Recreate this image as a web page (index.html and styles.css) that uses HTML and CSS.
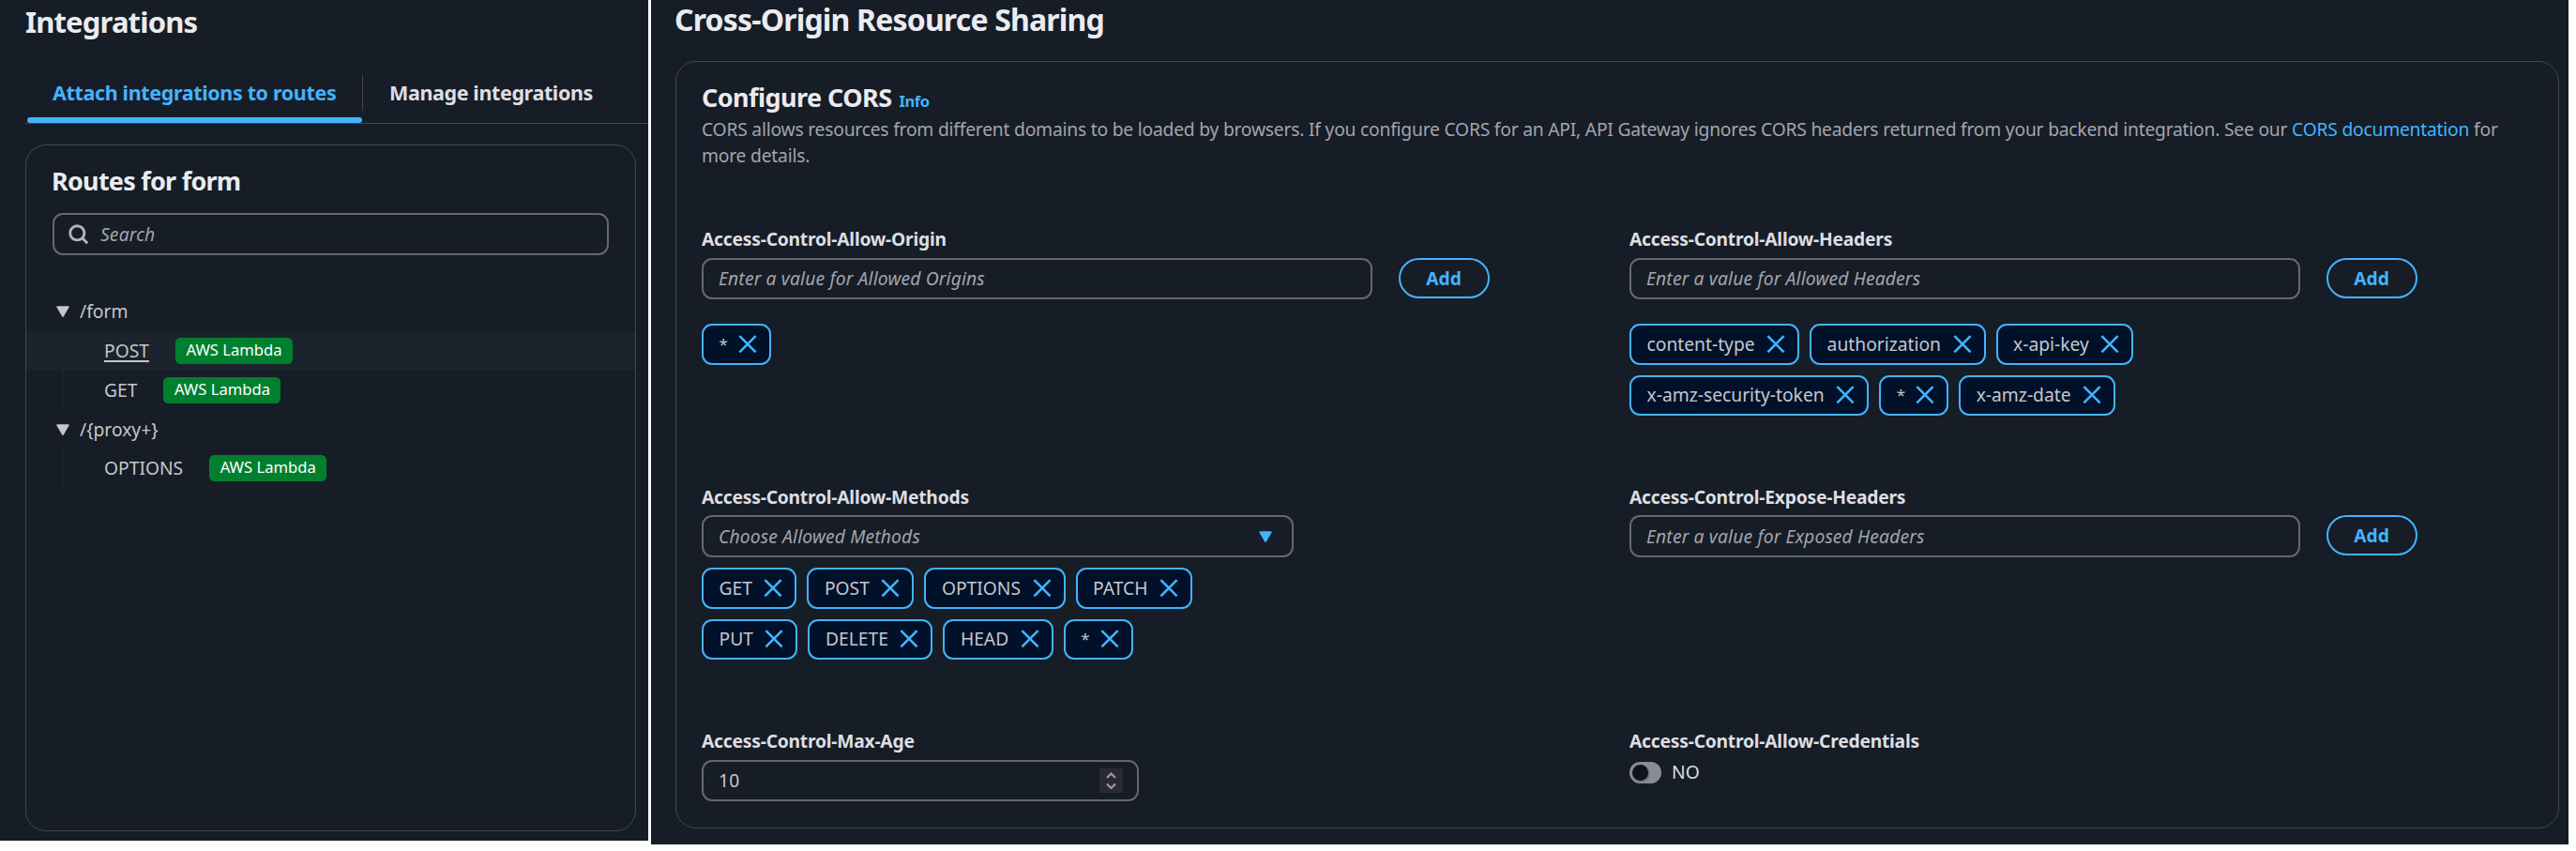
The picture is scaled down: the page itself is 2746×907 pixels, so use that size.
FILE: index.html
```html
<!DOCTYPE html>
<html lang="en">
<head>
<meta charset="utf-8">
<title>Integrations and CORS</title>
<link rel="stylesheet" href="styles.css">
</head>
<body>
<svg class="defs" width="0" height="0" aria-hidden="true">
  <symbol id="x" viewBox="0 0 22 22"><path d="M2.4 2.200l17.200 17.200M19.600 2.200L2.400 19.400" fill="none" stroke="currentColor" stroke-width="2.600"/></symbol>
  <symbol id="caret" viewBox="0 0 14 12"><path d="M1.2 1.1h11.6L7 11z" fill="currentColor" stroke="currentColor" stroke-width="1.8" stroke-linejoin="round"/></symbol>
</svg>
<main class="page">
  <section class="panel panel-routes">
    <h1 class="title title-routes">Integrations</h1>
    <nav class="tabs">
      <a class="tab tab-active">Attach integrations to routes</a>
      <a class="tab">Manage integrations</a>
    </nav>
    <div class="card card-routes">
      <h2 class="heading heading-routes">Routes for form</h2>
      <div class="input search">
        <svg class="search-icon" viewBox="0 0 22 22"><circle cx="9.3" cy="9.3" r="7.6" fill="none" stroke="currentColor" stroke-width="2.9"/><path d="M14.6 14.6l5.6 5.6" stroke="currentColor" stroke-width="2.9"/></svg>
        <span>Search</span>
      </div>
      <div class="tree">
        <div class="row"><svg class="caret"><use href="#caret"/></svg><span>/form</span></div>
        <div class="row leaf selected"><span class="link">POST</span><span class="badge">AWS Lambda</span></div>
        <div class="row leaf guide"><span>GET</span><span class="badge">AWS Lambda</span></div>
        <div class="row row-short"><svg class="caret"><use href="#caret"/></svg><span>/{proxy+}</span></div>
        <div class="row leaf guide"><span>OPTIONS</span><span class="badge">AWS Lambda</span></div>
      </div>
    </div>
  </section>
  <section class="panel panel-cors">
    <h1 class="title title-cors">Cross-Origin Resource Sharing</h1>
    <div class="card card-cors">
      <header class="cors-head">
        <h2 class="heading heading-cors">Configure CORS</h2>
        <a class="info">Info</a>
      </header>
      <p class="description">CORS allows resources from different domains to be loaded by browsers. If you configure CORS for an API, API Gateway ignores CORS headers returned from your backend integration. See our <a class="doc-link">CORS documentation</a> for more details.</p>
      <div class="fields">
        <div class="field">
          <div class="label">Access-Control-Allow-Origin</div>
          <div class="entry"><div class="input wide">Enter a value for Allowed Origins</div><button class="add">Add</button></div>
          <div class="tokens">
            <span class="token"><span class="star">*</span><svg class="x"><use href="#x"/></svg></span>
          </div>
        </div>
        <div class="field">
          <div class="label">Access-Control-Allow-Headers</div>
          <div class="entry"><div class="input wide">Enter a value for Allowed Headers</div><button class="add">Add</button></div>
          <div class="tokens">
            <span class="token">content-type<svg class="x"><use href="#x"/></svg></span>
            <span class="token">authorization<svg class="x"><use href="#x"/></svg></span>
            <span class="token">x-api-key<svg class="x"><use href="#x"/></svg></span>
            <span class="token">x-amz-security-token<svg class="x"><use href="#x"/></svg></span>
            <span class="token"><span class="star">*</span><svg class="x"><use href="#x"/></svg></span>
            <span class="token">x-amz-date<svg class="x"><use href="#x"/></svg></span>
          </div>
        </div>
        <div class="field field-mid">
          <div class="label">Access-Control-Allow-Methods</div>
          <div class="input select"><span>Choose Allowed Methods</span><svg class="caret caret-blue"><use href="#caret"/></svg></div>
          <div class="tokens tokens-methods">
            <span class="token">GET<svg class="x"><use href="#x"/></svg></span>
            <span class="token">POST<svg class="x"><use href="#x"/></svg></span>
            <span class="token">OPTIONS<svg class="x"><use href="#x"/></svg></span>
            <span class="token">PATCH<svg class="x"><use href="#x"/></svg></span>
            <span class="token">PUT<svg class="x"><use href="#x"/></svg></span>
            <span class="token">DELETE<svg class="x"><use href="#x"/></svg></span>
            <span class="token">HEAD<svg class="x"><use href="#x"/></svg></span>
            <span class="token"><span class="star">*</span><svg class="x"><use href="#x"/></svg></span>
          </div>
        </div>
        <div class="field field-mid">
          <div class="label">Access-Control-Expose-Headers</div>
          <div class="entry"><div class="input wide">Enter a value for Exposed Headers</div><button class="add">Add</button></div>
        </div>
        <div class="field">
          <div class="label">Access-Control-Max-Age</div>
          <div class="input number"><span>10</span><svg class="stepper" viewBox="0 0 25 26"><path d="M8 10l4.500-4.500L17 10M8 16.500l4.500 4.500 4.500-4.500" fill="none" stroke="currentColor" stroke-width="2.200"/></svg></div>
        </div>
        <div class="field">
          <div class="label">Access-Control-Allow-Credentials</div>
          <div class="toggle-row"><span class="toggle"><span class="knob"></span></span><span>NO</span></div>
        </div>
      </div>
    </div>
  </section>
</main>
</body>
</html>
```
FILE: styles.css
```css
* { box-sizing: border-box; }
body {
  margin: 0;
  background: #fff;
  color: #c6c6cd;
  font: 19.25px/28px "Noto Sans", "Open Sans", sans-serif;
}
.defs { display: block; }
.page { display: flex; align-items: flex-start; gap: 3px; }
.panel { background: #161d26; }
.panel-routes { width: 691px; height: 896px; padding-left: 27px; }
.panel-cors { width: 2044px; height: 900px; padding: 0 10px 0 26px; }
.title, .heading { margin: 0; color: #ebebf0; font-weight: 700; white-space: nowrap; }
.title-routes { font-size: 31px; line-height: 46px; letter-spacing: -0.85px; }
.title-cors { font-size: 32px; line-height: 41px; letter-spacing: -0.82px; margin-left: -1px; }

.tabs {
  display: flex;
  margin-top: 34px;
  height: 52px;
  padding-left: 2px;
  border-bottom: 1px solid #424650;
}
.tab {
  height: 38px;
  padding-left: 28px;
  font-size: 21.5px;
  line-height: 38px;
  font-weight: 700;
  letter-spacing: -0.38px;
  color: #dedee3;
  white-space: nowrap;
}
.tab-active {
  width: 358px;
  padding-left: 27px;
  color: #42b4ff;
  letter-spacing: -0.36px;
  border-right: 1px solid #424650;
}
.tab-active::after {
  content: "";
  display: block;
  width: 357px;
  height: 6px;
  margin: 7px 0 0 -27px;
  border-radius: 3px;
  background: #42b4ff;
}

.card { border: 1px solid #424650; border-radius: 22px; }
.card-routes { width: 651px; height: 732px; margin-top: 22px; padding-top: 19px; }
.card-cors { height: 818px; margin-top: 24px; padding: 19px 27px 0; }
.heading { font-size: 27px; }
.heading-routes { line-height: 37px; margin-left: 27px; letter-spacing: -0.75px; }
.heading-cors { line-height: 38px; letter-spacing: -0.55px; }

.input {
  display: flex;
  align-items: center;
  height: 44px;
  padding-left: 16px;
  border: 2px solid #656871;
  border-radius: 11px;
  font-style: italic;
  letter-spacing: 0.15px;
  color: #a4a4ad;
  white-space: nowrap;
}
.search { width: 593px; height: 45px; margin: 16px 0 0 28px; padding-left: 15px; gap: 12px; }
.search-icon { width: 22px; height: 22px; color: #b4b4bb; }

.tree { margin-top: 39px; }
.row { display: flex; align-items: center; height: 42px; padding-left: 32px; white-space: nowrap; }
.row-short { height: 41px; }
.caret { width: 14px; height: 12px; margin-right: 11px; flex: none; }
.leaf { padding-left: 83px; }
.selected { background: #1b232d; }
.guide { background: linear-gradient(#1e2630, #1e2630) 39px 0 / 1px 100% no-repeat; }
.link { text-decoration: underline; text-decoration-thickness: 2px; text-underline-offset: 3px; }
.badge {
  height: 28px;
  margin-left: 28px;
  padding: 0 11.5px;
  border-radius: 5.5px;
  background: #00802f;
  color: #fff;
  font-size: 16.6px;
  line-height: 26px;
}

.cors-head { display: flex; align-items: baseline; gap: 8px; }
.info { color: #42b4ff; font-size: 16.5px; font-weight: 700; letter-spacing: -0.5px; }
.description { margin: 1px 0 0; color: #a4a4ad; letter-spacing: -0.21px; }
.doc-link { color: #42b4ff; }

.fields {
  display: grid;
  grid-template-columns: 989px 1fr;
  grid-template-rows: 275px 260px auto;
  margin-top: 61px;
}
.label { margin-bottom: 6px; color: #dedee3; font-weight: 700; letter-spacing: -0.22px; }
.field-mid .label { margin-bottom: 5px; }
.field-mid .input { height: 45px; }
.entry { display: flex; gap: 28px; }
.wide { width: 714.5px; }
.add {
  width: 97px;
  height: 43px;
  padding: 0;
  border: 2px solid #42b4ff;
  border-radius: 22px;
  background: transparent;
  color: #42b4ff;
  font: 700 19.25px/38px "Noto Sans", "Open Sans", sans-serif;
}
.select { width: 631px; justify-content: space-between; padding-right: 11px; }
.select .caret { margin-right: 10px; }
.caret-blue { color: #42b4ff; }
.tokens { display: flex; flex-wrap: wrap; gap: 11px; width: 714px; margin-top: 26px; }
.tokens-methods { width: 631px; margin-top: 11px; }
.token {
  display: flex;
  align-items: center;
  height: 43.5px;
  padding: 0 12px 0 16.5px;
  border: 2px solid #42b4ff;
  border-radius: 11px;
  background: #001129;
  white-space: nowrap;
}
.star { width: 8px; font-size: 17px; }
.x { width: 22px; height: 22px; margin-left: 11.5px; color: #42b4ff; }
.number { width: 466px; justify-content: space-between; padding-right: 15px; font-style: normal; color: #c6c6cd; }
.stepper { width: 25px; height: 26px; background: #2b2a33; color: #9a98a3; }
.toggle-row { display: flex; align-items: center; gap: 11px; margin-top: -1px; color: #dedee3; }
.toggle { width: 34px; height: 23px; padding: 3px; border-radius: 11.5px; background: #8c8c94; }
.knob { display: block; width: 17px; height: 17px; border-radius: 50%; background: #0f141a; box-shadow: 1px 1px 2px #5a5c64; }
```
